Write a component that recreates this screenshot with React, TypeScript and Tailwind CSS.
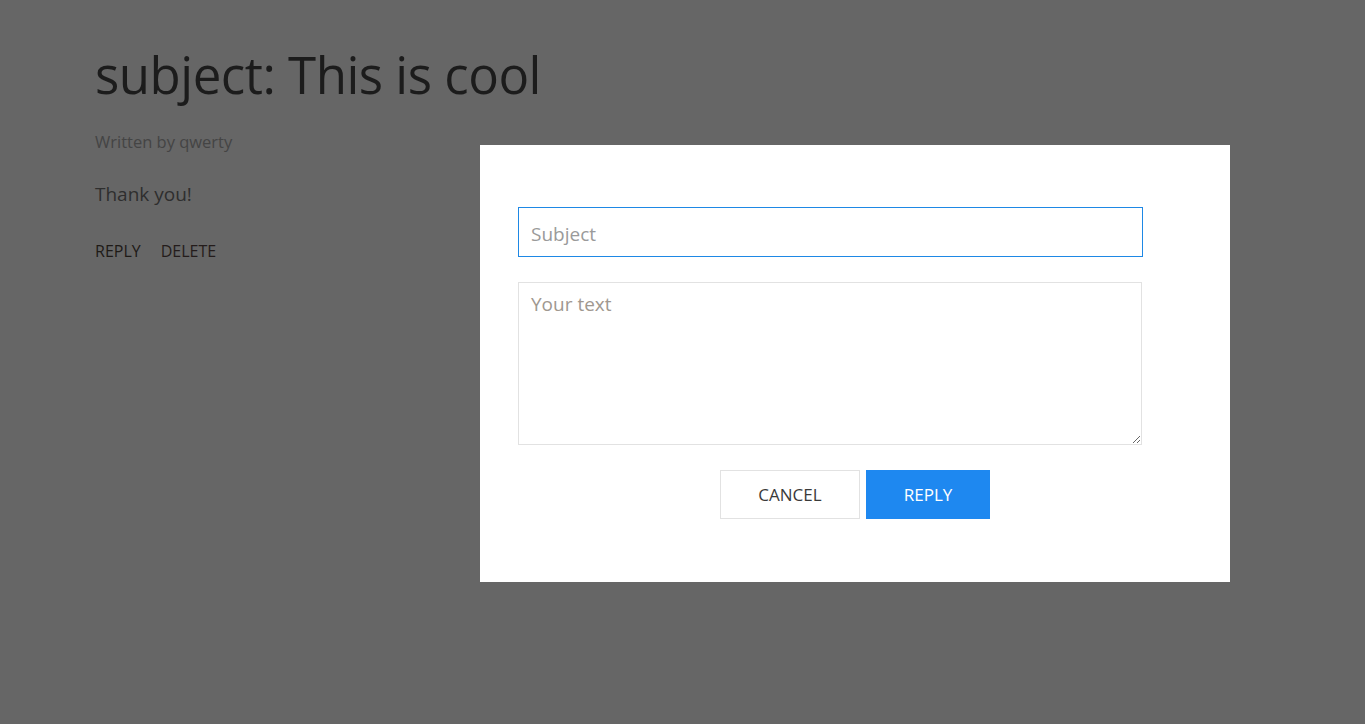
import { useState } from 'react'

const font = { fontFamily: '"Open Sans", "Noto Sans", sans-serif' }

export default function App() {
  const [subject, setSubject] = useState('')
  const [text, setText] = useState('')

  return (
    <div className="relative min-h-[724px] w-full bg-[#666666] overflow-hidden" style={font}>
      <div className="px-[95px] pt-[42px]">
        <h1 className="text-[51px] leading-[64px] text-[#1c1c1c] tracking-[-0.5px]">subject: This is cool</h1>
        <p className="mt-[24px] text-[16.5px] text-[#444444]">Written by qwerty</p>
        <p className="mt-[25px] text-[19px] text-[#2e2e2e]">Thank you!</p>
        <div className="mt-[31px] flex gap-[20px] text-[16px]">
          <button className="text-[#1e1a17]">REPLY</button>
          <button className="text-[#241c1b]">DELETE</button>
        </div>
      </div>

      {/* modal */}
      <div className="absolute left-[480px] top-[145px] w-[750px] h-[437px] bg-white pl-[38px] pt-[62px]">
        <input
          value={subject}
          onChange={e => setSubject(e.target.value)}
          placeholder="Subject"
          className="block w-[625px] h-[50px] border border-[#1e88e5] px-[12px] pt-[3px] text-[19px] text-[#333] placeholder:text-[#9a9a9a] outline-none"
          style={font}
        />
        <textarea
          value={text}
          onChange={e => setText(e.target.value)}
          placeholder="Your text"
          className="block mt-[25px] w-[624px] h-[163px] border border-[#e2e2e2] px-[12px] py-[7px] text-[19px] text-[#333] placeholder:text-[#a09890] outline-none"
          style={font}
        />
        <div className="mt-[25px] flex justify-center gap-[6px] pr-[38px]">
          <button className="w-[140px] h-[49px] border border-[#e2e2e2] bg-white text-[17px] text-[#3a3a3a]">CANCEL</button>
          <button className="w-[124px] h-[49px] bg-[#1e88f0] text-[17px] text-white">REPLY</button>
        </div>
      </div>
    </div>
  )
}
